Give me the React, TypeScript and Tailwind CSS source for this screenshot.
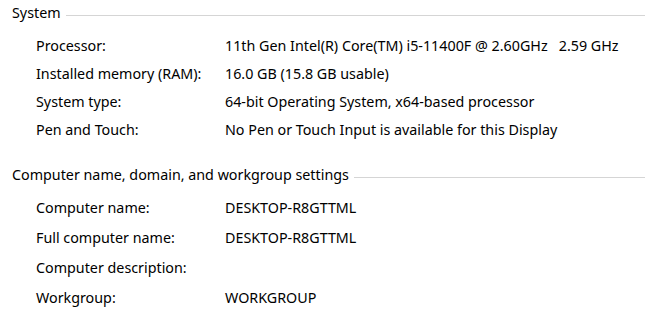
const system = [
  ['Processor:', '11th Gen Intel(R) Core(TM) i5-11400F @ 2.60GHz   2.59 GHz'],
  ['Installed memory (RAM):', '16.0 GB (15.8 GB usable)'],
  ['System type:', '64-bit Operating System, x64-based processor'],
  ['Pen and Touch:', 'No Pen or Touch Input is available for this Display'],
];

const computer = [
  ['Computer name:', 'DESKTOP-R8GTTML'],
  ['Full computer name:', 'DESKTOP-R8GTTML'],
  ['Computer description:', ''],
  ['Workgroup:', 'WORKGROUP'],
];

function Heading({ title }: { title: string }) {
  return (
    <div className="flex h-[26px] items-center pl-[12px] pr-px">
      <span className="whitespace-nowrap">{title}</span>
      <div className="ml-[5px] mt-[4px] h-px flex-1 bg-[#d5d5d5]" />
    </div>
  );
}

function Row({ label, value, tall }: { label: string; value: string; tall?: boolean }) {
  return (
    <div className={`flex items-center pl-[36px] ${tall ? 'h-[30px]' : 'h-[28px]'}`}>
      <span className="w-[189px] shrink-0 whitespace-nowrap">{label}</span>
      <span className="whitespace-pre">{value}</span>
    </div>
  );
}

export default function App() {
  return (
    <div className="h-[329px] w-[646px] overflow-hidden bg-white text-[14.3px] text-black [font-family:'Segoe_UI','Noto_Sans',sans-serif]">
      <Heading title="System" />
      <div className="mt-[6px]">
        {system.map(([l, v]) => (
          <Row key={l} label={l} value={v} />
        ))}
      </div>
      <div className="mt-[18px]">
        <Heading title="Computer name, domain, and workgroup settings" />
      </div>
      <div className="mt-[5px]">
        {computer.map(([l, v]) => (
          <Row key={l} label={l} value={v} tall />
        ))}
      </div>
    </div>
  );
}
